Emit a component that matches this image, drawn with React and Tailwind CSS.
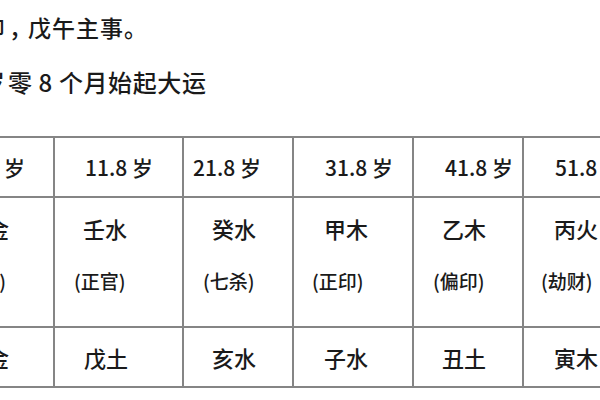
import React from "react";

const font = { fontFamily: '"Noto Sans CJK SC", "Noto Sans", sans-serif' };

function Cell({ children, className = "" }) {
  return <div className={"bg-white flex " + className}>{children}</div>;
}

export default function App() {
  return (
    <div className="w-[600px] h-[400px] overflow-hidden bg-white text-[#1a1a1a] font-medium" style={font}>
      <div className="flex items-center h-[30px] mt-[12px] text-[23px] leading-[30px] whitespace-nowrap">
        <span className="ml-[-18px] w-[27px] shrink-0">卯</span>
        <span className="shrink-0 tracking-[-4px]">，</span>
        <span className="tracking-[1px]">戊午主事。</span>
      </div>
      <div className="flex items-center h-[30px] mt-[25px] text-[24px] leading-[30px] whitespace-nowrap">
        <span className="ml-[-19px]">岁</span>
        <span className="ml-[3px] tracking-[0.6px]">零 8 个月始起大运</span>
      </div>
      <div
        className="mt-[39px] ml-[-47px] w-max grid grid-cols-[100px_127px_108px_118px_108px_110px] grid-rows-[58px_128px_58px] gap-[2px] bg-[#858585] border-y-2 border-[#858585] text-[21px] leading-none whitespace-nowrap"
      >
        <Cell className="items-center justify-end pr-[28px]">1.8 岁</Cell>
        <Cell className="items-center pl-[30px]">11.8 岁</Cell>
        <Cell className="items-center pl-[9px]">21.8 岁</Cell>
        <Cell className="items-center pl-[31px]">31.8 岁</Cell>
        <Cell className="items-center pl-[31px]">41.8 岁</Cell>
        <Cell className="items-center pl-[31px]">51.8 岁</Cell>

        <Cell className="flex-col items-end pr-[44px]">
          <div className="mt-[19px] text-[22px]">庚金</div>
          <div className="mt-[32px] mr-[3px] text-[19px]">(比肩)</div>
        </Cell>
        <Cell className="flex-col pl-[28px]">
          <div className="mt-[19px] text-[22px]">壬水</div>
          <div className="mt-[32px] ml-[-9px] text-[19px]">(正官)</div>
        </Cell>
        <Cell className="flex-col pl-[28px]">
          <div className="mt-[19px] text-[22px]">癸水</div>
          <div className="mt-[32px] ml-[-9px] text-[19px]">(七杀)</div>
        </Cell>
        <Cell className="flex-col pl-[30px]">
          <div className="mt-[19px] text-[22px]">甲木</div>
          <div className="mt-[32px] ml-[-12px] text-[19px]">(正印)</div>
        </Cell>
        <Cell className="flex-col pl-[28px]">
          <div className="mt-[19px] text-[22px]">乙木</div>
          <div className="mt-[32px] ml-[-9px] text-[19px]">(偏印)</div>
        </Cell>
        <Cell className="flex-col pl-[30px]">
          <div className="mt-[19px] text-[22px]">丙火</div>
          <div className="mt-[32px] ml-[-13px] text-[19px]">(劫财)</div>
        </Cell>

        <Cell className="items-center justify-end pr-[44px] text-[22px]">申金</Cell>
        <Cell className="items-center pl-[29px] text-[22px]">戊土</Cell>
        <Cell className="items-center pl-[28px] text-[22px]">亥水</Cell>
        <Cell className="items-center pl-[30px] text-[22px]">子水</Cell>
        <Cell className="items-center pl-[28px] text-[22px]">丑土</Cell>
        <Cell className="items-center pl-[30px] text-[22px]">寅木</Cell>
      </div>
    </div>
  );
}
